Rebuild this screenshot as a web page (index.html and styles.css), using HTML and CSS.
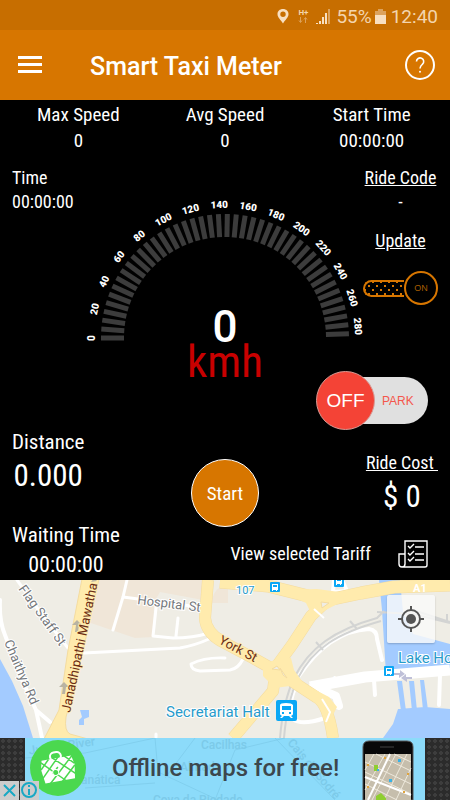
FILE: index.html
```html
<!DOCTYPE html>
<html lang="en">
<head>
  <meta charset="UTF-8">
  <meta name="viewport" content="width=device-width, initial-scale=1.0">
  <title>Smart Taxi Meter</title>
  <link rel="stylesheet" href="styles.css">
</head>
<body>

  <div class="status-bar">
    <svg class="pin" viewBox="0 0 12 16" width="12" height="16">
      <path fill-rule="evenodd" d="M6 1C2.700 1 .5 3.200.5 6.200.5 9.500 4 12 6 15.500 8 12 11.500 9.500 11.500 6.200 11.500 3.200 9.300 1 6 1zM6 3.500a2.700 2.700 0 1 1 0 5.400 2.700 2.700 0 0 1 0-5.400z"/>
    </svg>
    <span class="net">H+
      <svg viewBox="0 0 10 6" width="10" height="6">
        <path d="M2.500 0v5M1 3.500l1.500 2 1.500-2M7.500 6V1M6 2.500l1.500-2 1.500 2"/>
      </svg>
    </span>
    <svg viewBox="0 0 16 16" width="16" height="16">
      <path class="lit" d="M1 16v-1h2v1zM4 16v-3h2v3zM7 16V9h2v7z"/>
      <path class="lit" d="M10 16V5h2v11z"/>
      <path class="dim" d="M13 16V1h2v15z"/>
    </svg>
    <span class="percent">55%</span>
    <svg class="battery" viewBox="0 0 11 16" width="11" height="16">
      <path class="dim" d="M3 1h5v2h3v4H0V3h3z"/>
      <path class="lit" d="M0 7h11v9H0z"/>
    </svg>
    <span>12:40</span>
  </div>

  <header class="app-bar">
    <button class="icon-btn" type="button" aria-label="Menu">
      <svg viewBox="0 0 24 18" width="24" height="18"><path d="M0 0h24v3H0zM0 7h24v3H0zM0 14h24v3H0z" fill="#fff"/></svg>
    </button>
    <h1>Smart Taxi Meter</h1>
    <button class="icon-btn" type="button" aria-label="Help">
      <svg viewBox="0 0 30 30" width="30" height="30" fill="none" stroke="#fff">
        <circle cx="15" cy="15" r="14" stroke-width="2"/>
        <path d="M11.500 11.500a3.600 3.600 0 1 1 6 2.700c-1.600 1.400-2.500 2-2.500 4.300" stroke-width="1.600"/>
        <circle cx="15" cy="21.700" r="1" fill="#fff" stroke="none"/>
      </svg>
    </button>
  </header>

  <main class="meter">
    <div class="stats">
      <div>Max Speed<br>0</div>
      <div>Avg Speed<br>0</div>
      <div>Start Time<br>00:00:00</div>
    </div>

    <div class="dial">
      <div class="time">Time<br>00:00:00</div>

      <svg id="gauge" class="gauge" viewBox="78 196 294 186">
        <text class="speed" x="225" y="342">0</text>
        <text class="unit" x="225" y="377">kmh</text>
      </svg>

      <div class="ride">
        <a href="#">Ride Code</a>
        <span>-</span>
        <a class="update" href="#">Update</a>
        <label class="toggle-on">
          <input type="checkbox" checked aria-label="Update">
          <span class="track"></span>
          <span class="knob">ON</span>
        </label>
      </div>

      <label class="toggle-park">
        <input type="checkbox">
        <span class="knob">OFF</span>
        <span class="track">PARK</span>
      </label>
    </div>

    <div class="readings">
      <div class="left">
        <div class="distance">Distance<br><strong>0.000</strong></div>
        <div class="waiting">Waiting Time<br><span>00:00:00</span></div>
      </div>
      <button class="start" type="button">Start</button>
      <div class="cost">
        <a href="#">Ride Cost&nbsp;</a>
        <strong>$ 0</strong>
      </div>
      <a class="tariff" href="#">
        View selected Tariff
        <svg viewBox="0 0 30 28" width="30" height="28" fill="none" stroke="#fff" stroke-width="1.400">
          <path d="M7 24V1h22v24a2 2 0 0 1-2 2H4a3 3 0 0 1-3-3V14h6M7 24a3 3 0 0 1-3 3"/>
          <path d="M10 6l2 2 4-4M17 7h9M10 13l2 2 4-4M17 14h9M10 19l2 2 4-4M17 20h9"/>
        </svg>
      </a>
    </div>
  </main>

  <section class="map">
    <svg class="map-art" viewBox="0 580 450 158" preserveAspectRatio="xMidYMid slice">
      <rect y="580" width="450" height="158" fill="#efede5"/>
      <!-- blocks -->
      <path fill="#f0e6d8" d="M97 580h106v20l-43-8-6 10-1 35-18 1-50-17zM212 603q0-14 16-20v20z"/>
      <!-- water -->
      <g fill="#a3cbff">
        <path d="M0 659l12 22 11 25 10 32H0zM379 580h21l3 32 10 22 37 10v24l-64 6-4-64zM450 709l-25-2-27 2-5 15-10 14h67zM397 681l4 30h5l-4-30zM409 681l3 30h5l-3-30zM420 680l3 30h5l-4-30zM80 710h9v7l-5 2v6h-5v-5l3-3z"/>
      </g>
      <!-- minor streets -->
      <g fill="none" stroke="#fff" stroke-width="3" stroke-linecap="round" stroke-linejoin="round">
        <path stroke-width="4" d="M0 600q-1 21 5 35l17 45 14 30 6 28M36 710l14 12"/>
        <path d="M17 580l23 32 28 36M127 580l-4 17-10 33M123 597l76 10M156 608l-3 28 20 2q20 0 36-5M178 618l-2 18M84 653l96-5q16-3 29-9M225 658q-20-1-34 6 0 6 9 7l30-1q8-1 13-11M156 737v-3"/>
        <path stroke-width="4" d="M299 676q30-45 70-47 8 1 8 10l5 21M295 688q-8 20-2 31 8 7 32-1M374 680l1 15M440 675l-1 30M334 580l-1 12 14-1-4-9"/>
        <path stroke-width="11" stroke-linecap="butt" d="M310 687l55-10 85-7"/>
        <path stroke-width="8" d="M313 686l23 10 3 10"/>
      </g>
      <!-- railway -->
      <g fill="none" stroke="#d3d4d3" stroke-width="2">
        <path d="M280 738q3-36 14-60c15-30 40-48 83-60l7-7M284 738q3-36 14-60c15-30 40-45 83-57M377 612l36 2 37 9M413 610l37 12M316 642l7 8M350 621l7 8M294 676l6 6M447 614v8"/>
      </g>
      <!-- main roads -->
      <g fill="none" stroke-linejoin="round">
        <g stroke="#f4dca0">
          <path stroke-width="12" d="M208 580l-3 38q1 14 16 23l32 17 25 14 38 25q12 6 17 41"/>
          <path stroke-width="13" d="M220 582l48 4 40 10 20 4 33-7 33-6 56-2"/>
          <path stroke-width="12" d="M330 598l-19 18-19 29-16 22-3 24-40 47"/>
        </g>
        <g stroke="#ffebad">
          <path stroke-width="11" d="M208 580l-3 38q1 14 16 23l32 17 25 14 38 25q12 6 17 41"/>
          <path stroke-width="12" d="M220 582l48 4 40 10 20 4 33-7 33-6 56-2"/>
          <path stroke-width="11" d="M330 598l-19 18-19 29-16 22-3 24-40 47"/>
        </g>
      </g>
      <path fill="#ffebad" d="M280 590l26 13 6 12 10-3 19-10 6-9-30-4zM263 664l15-5 13-1 3 12 10 14-29 4-12-12zM304 684l25 13 8 10-7 14-12-20z"/>
      <path fill="#ffebad" stroke="#f4dca0" d="M82 579L68 650l-9 60-15 29h44l-18-5q-6-3-4-17l17-66 16-72z"/>
      <path fill="#efede5" stroke="#f4dca0" d="M321 602l8 1-7 5zM272 669l5-3 3 4zM283 675l-3-7 7 10z"/>
      <path d="M314 609l10 9M322 699l8 13-4 10" fill="none" stroke="#fff" stroke-width="2"/>
      <!-- direction arrows -->
      <g fill="#b9b3a2">
        <path d="M77 620l5 5h-3l-1 7h-3l1-7h-4zM64 682l5 5h-3l-1 7h-3l1-7h-4zM91 582l6-1-3-3z"/>
        <path fill="#bfc0d8" d="M393 673h7v-3l5 4-6 4v-3h-6zM412 677h-6v-3l-5 4 6 4v-3h5z"/>
      </g>
      <!-- bus and rail stops -->
      <g fill="#0aa7f5"><rect x="270" y="582" width="10" height="10" rx="1"/><rect x="334" y="578" width="10" height="9" rx="1"/><rect x="384" y="666" width="10" height="10" rx="1"/><rect x="276" y="700" width="21" height="21" rx="2"/></g>
      <g fill="#fff">
        <path d="M272 584h6v6h-1v1h-1v-1h-3v1h-1zM336 579h6v5h-1v1h-1v-1h-3v1h-1zM386 668h6v6h-1v1h-1v-1h-3v1h-1z"/>
        <path d="M280 705q0-2 6-2t7 2v9q0 1-2 2l2 2h-2l-2-2h-5l-2 2h-2l2-2q-2-1-2-2z"/>
      </g>
      <path fill="#0aa7f5" d="M273 585h4v2h-4zM337 580h4v1h-4zM387 669h4v2h-4zM282 706h9v4h-9zM282 712h2v2h-2zM289 712h2v2h-2z"/>
      <g class="street">
        <text transform="translate(18 589) rotate(54)">Flag Staff St</text>
        <text transform="translate(4 642) rotate(67)">Chaithya Rd</text>
        <text transform="translate(137 604) rotate(7)">Hospital St</text>
        <text class="road" transform="translate(70 713) rotate(-78)">Janadhipathi Mawatha</text>
        <text class="road" transform="translate(218 643) rotate(28)">York St</text>
        <text class="shield" x="413" y="592">A1</text>
        <text class="shield" x="331" y="684">A06</text>
        <text class="blue small" x="236" y="594">107</text>
        <text class="blue" x="166" y="717">Secretariat Halt</text>
        <text class="blue" x="398" y="663">Lake House</text>
      </g>
    </svg>
    <button class="locate" type="button" aria-label="My location">
      <svg viewBox="0 0 26 26" width="26" height="26" fill="none" stroke="#555" stroke-width="2">
        <circle cx="13" cy="13" r="9"/>
        <circle cx="13" cy="13" r="5" fill="#555" stroke="none"/>
        <path d="M13 0v5M13 21v5M0 13h5M21 13h5"/>
      </svg>
    </button>
  </section>

  <aside class="ad">
    <a class="banner" href="#">
      <svg class="banner-map" viewBox="0 0 400 62" preserveAspectRatio="xMidYMid slice">
        <path d="M0 20l60-5 70-15M130 0l3 34 60 28M140 40l30-40M60 50l70-5M250 0l60 62M190 62l20-50 50-12"/>
        <text x="2" y="17" transform="rotate(-8)">Juntas River</text>
        <text x="56" y="46">anática</text>
        <text x="176" y="11">Cacilhas</text>
        <text x="155" y="33">Almada</text>
        <text x="128" y="66">Cova da Piedade</text>
        <text transform="translate(262 5) rotate(50)">Cais do Sodré</text>
      </svg>
      <svg class="logo" viewBox="0 0 56 56" width="56" height="56">
        <circle cx="28" cy="28" r="28" fill="#4bd84f"/>
        <g transform="rotate(-10 28 28)">
          <rect x="22" y="12" width="11" height="8" rx="4" fill="none" stroke="#fff" stroke-width="2"/>
          <path fill="#fff" d="M13 18h30l2 9-2 14H13l-2-14z"/>
          <path d="M11 27l9-9M11 36l19-19M18 42l26-24M30 42l15-14M12 20l22 22M24 17l21 20M36 17l9 9M28 27l-6 6" stroke="#4bd84f" stroke-width="1.500"/>
          <circle cx="25" cy="32" r="3" fill="#4bd84f" stroke="#fff"/>
        </g>
      </svg>
      <span class="slogan">Offline maps for free!</span>
      <svg class="phone" viewBox="0 0 52 60" width="52" height="60">
        <path d="M1 60V7q0-6 6-6h38q6 0 6 6v53z" fill="#080808" stroke="#555"/>
        <path d="M18 7h14" stroke="#252525" stroke-width="2"/>
        <path fill="#c6beac" d="M3 14h46v46H3z"/>
        <g fill="none" stroke="#eee9dc">
          <path d="M3 22l46 22M3 32l46 22M3 44l32 16M14 14l35 17M32 14l17 8M12 14L3 30M23 14L3 50M34 14L10 60M45 14L22 60M49 28L34 60"/>
          <path stroke="#fff" stroke-width="2" d="M28 14L6 60M3 37l46 18"/>
        </g>
        <path fill="#8fce30" d="M12 25h4v6h-4zM14 56l5-3 5 5v2H14z"/>
        <path fill="#36b3e8" d="M36 19h3v3h-3zM27 39h3v3h-3zM15 29h2v2h-2z"/>
        <path fill="#e0a43c" d="M5 24h2v2H5zM22 17h2v2h-2zM45 33h2v2h-2zM5 46h2v2H5zM41 51h2v2h-2z"/>
      </svg>
    </a>
    <div class="ad-choices">
      <button type="button" aria-label="Close ad"><svg viewBox="0 0 19 19" width="19" height="19"><path d="M4 4l11 11M15 4L4 15"/></svg></button>
      <button type="button" aria-label="Ad info"><svg viewBox="0 0 19 19" width="19" height="19"><circle cx="9" cy="9" r="7"/><path d="M9 8v6M9 4v2"/></svg></button>
    </div>
  </aside>

  <script>
    const NS = 'http://www.w3.org/2000/svg';
    const gauge = document.getElementById('gauge');
    const cx = 225, cy = 338;

    // ticks
    for (let i = 0; i < 44; i++) {
      const tick = document.createElementNS(NS, 'path');
      tick.setAttribute('class', 'tick');
      tick.setAttribute('d', 'M101 338h23');
      tick.setAttribute('transform', `rotate(${i * 4.14} ${cx} ${cy})`);
      gauge.appendChild(tick);
    }

    // numbers, 20 km/h apart
    for (let v = 0; v <= 280; v += 20) {
      const label = document.createElementNS(NS, 'text');
      label.setAttribute('class', 'num');
      label.setAttribute('x', cx);
      label.setAttribute('y', cy - 130);
      label.setAttribute('transform', `rotate(${v * 0.625 - 90} ${cx} ${cy})`);
      label.textContent = v;
      gauge.appendChild(label);
    }
  </script>
</body>
</html>
```
FILE: styles.css
```css
* {
  box-sizing: border-box;
}

body {
  margin: 0;
  min-height: 100vh;
  display: flex;
  flex-direction: column;
  background: #000;
  color: #fff;
  font-family: "Roboto Condensed", Roboto, sans-serif;
  font-size: 18px;
}

a {
  color: inherit;
}

button {
  margin: 0;
  padding: 0;
  border: 0;
  background: none;
  color: inherit;
  font: inherit;
  cursor: pointer;
}

svg {
  display: block;
}

/* status bar */
.status-bar {
  height: 30px;
  padding: 2px 12px 0 0;
  display: flex;
  align-items: center;
  justify-content: flex-end;
  gap: 5px;
  background: #c76e00;
  color: #f3d5ae;
  font-family: Roboto, sans-serif;
  font-size: 19px;
}

.pin,
.lit {
  fill: #f8dfc0;
}

.pin {
  margin-right: 4px;
}

.dim {
  fill: #dca25c;
}

.net {
  width: 12px;
  font-size: 8px;
  font-weight: bold;
  line-height: 8px;
}

.net path {
  fill: none;
  stroke: #dca25c;
}

.battery {
  margin-left: -2px;
}

/* app bar */
.app-bar {
  height: 70px;
  padding: 0 15px 0 18px;
  display: flex;
  align-items: center;
  background: #d77600;
}

.app-bar h1 {
  flex: 1;
  margin: 4px 0 0 48px;
  font: 500 25px/30px Roboto, sans-serif;
}

/* meter */
.stats {
  padding: 2px 5px 0;
  display: grid;
  grid-template-columns: repeat(3, 1fr);
  font-size: 19px;
  line-height: 26px;
  text-align: center;
}

.dial {
  padding: 0 12px;
  display: grid;
  grid-template-columns: 66px 1fr 66px;
  line-height: 24px;
}

.time {
  padding-top: 12px;
  white-space: nowrap;
}

.gauge {
  grid-column: 2;
  grid-row: 1 / 3;
  width: 100%;
  max-width: 294px;
  margin-top: 42px;
  justify-self: center;
  overflow: visible;
}

.gauge text {
  fill: #fff;
  text-anchor: middle;
}

.gauge .speed {
  font: 500 44px Roboto, sans-serif;
}

.gauge .unit {
  fill: #c80000;
  font-size: 45px;
}

.gauge .num {
  font: 900 10px Roboto, sans-serif;
}

.tick {
  stroke: #3c3c3c;
  stroke-width: 5;
}

.ride {
  grid-column: 3;
  grid-row: 1;
  padding-top: 12px;
  display: flex;
  flex-direction: column;
  align-items: center;
  justify-self: end;
  white-space: nowrap;
}

.update {
  margin: 15px 0 18px;
}

.toggle-on,
.toggle-park {
  display: flex;
  align-items: center;
  position: relative;
  font-family: "Liberation Sans", sans-serif;
  cursor: pointer;
}

.toggle-on input,
.toggle-park input {
  position: absolute;
  margin: 0;
  opacity: 0;
}

.toggle-on .track {
  width: 41px;
  height: 17px;
  border: 2px solid #d77600;
  border-right: 0;
  border-radius: 9px 0 0 9px;
  background-image: radial-gradient(#d77600 1px, transparent 1px), radial-gradient(#d77600 1px, transparent 1px);
  background-size: 8px 8px;
  background-position: 0 0, 4px 4px;
}

.toggle-on .knob {
  width: 34px;
  height: 34px;
  border: 2px solid #d77600;
  border-radius: 50%;
  color: #a85d00;
  font-size: 9px;
  line-height: 31px;
  text-align: center;
}

.toggle-park {
  grid-column: 2 / 4;
  grid-row: 2;
  justify-self: end;
  margin: 66px 10px 0 0;
}

.toggle-park .knob {
  z-index: 1;
  width: 59px;
  height: 59px;
  border: 1px solid #d89a94;
  border-radius: 50%;
  background: #f44336;
  font-size: 19px;
  line-height: 58px;
  text-align: center;
}

.toggle-park .track {
  width: 82px;
  height: 47px;
  margin-left: -29px;
  padding-left: 36px;
  border-radius: 0 24px 24px 0;
  background: #e0e0e0;
  color: #f4574c;
  font-size: 12px;
  line-height: 49px;
}

/* readings */
.readings {
  padding: 0 12px;
  display: grid;
  grid-template-columns: 1fr auto 1fr;
  grid-template-rows: 97px 53px;
}

.left {
  grid-row: 1 / 3;
  display: flex;
  flex-direction: column;
  align-items: flex-start;
  justify-content: space-between;
  font-size: 21px;
  line-height: 24px;
  text-align: center;
}

.left strong,
.cost strong {
  font-size: 31px;
  font-weight: normal;
  line-height: 44px;
}

.waiting {
  line-height: 30px;
}

.waiting span {
  font-size: 22px;
}

.start {
  width: 68px;
  height: 68px;
  align-self: end;
  border: 1px solid #fff;
  border-radius: 50%;
  background: #d77600;
  font-size: 19px;
}

.cost {
  padding-top: 21px;
  display: flex;
  flex-direction: column;
  align-items: center;
  justify-self: end;
  line-height: 24px;
}

.tariff {
  grid-column: 2 / 4;
  padding-right: 10px;
  display: flex;
  align-items: center;
  justify-content: flex-end;
  gap: 27px;
  text-decoration: none;
}

/* map */
.map {
  flex: 1;
  min-height: 158px;
  position: relative;
  background: #efede5;
}

.map-art {
  position: absolute;
  width: 100%;
  height: 100%;
}

.street text {
  fill: #74777b;
  stroke: #fff;
  stroke-width: 2px;
  paint-order: stroke;
  font-size: 13px;
  font-family: Roboto, sans-serif;
}

.street .road {
  fill: #6b2c14;
  stroke: #ffebad;
}

.street .blue {
  fill: #279bcb;
  font-size: 15px;
}

.street .small {
  font-size: 11px;
}

.street .shield {
  fill: #fff;
  stroke: none;
  font-size: 11px;
  font-weight: bold;
}

.locate {
  position: absolute;
  top: 15px;
  right: 15px;
  width: 48px;
  height: 48px;
  display: flex;
  align-items: center;
  justify-content: center;
  border-radius: 2px;
  background: rgba(250, 250, 250, 0.8);
  box-shadow: 0 1px 2px rgba(0, 0, 0, 0.2);
}

/* ad */
.ad {
  height: 62px;
  padding: 0 25px;
  position: relative;
  background: #2b2b2b radial-gradient(#3d3d3d 2px, transparent 2px) 0 0 / 6px 6px;
}

.banner {
  height: 100%;
  padding: 2px 11px 0 5px;
  display: flex;
  position: relative;
  overflow: hidden;
  background: #8cdbfa;
  color: #3c474d;
  text-decoration: none;
}

.banner-map {
  position: absolute;
  top: 0;
  left: 0;
  width: 100%;
  height: 100%;
  fill: #7ccae9;
  font: 500 12px Roboto, sans-serif;
}

.banner-map path {
  fill: none;
  stroke: #81cfee;
}

.logo,
.slogan,
.phone {
  position: relative;
}

.slogan {
  flex: 1;
  padding-left: 26px;
  font: 500 24px/56px Roboto, sans-serif;
}

.ad-choices {
  position: absolute;
  left: 0;
  bottom: 0;
  display: flex;
  gap: 1px;
}

.ad-choices button {
  background: #ccc;
}

.ad-choices svg {
  fill: none;
  stroke: #18a8c4;
  stroke-width: 2;
}
```
